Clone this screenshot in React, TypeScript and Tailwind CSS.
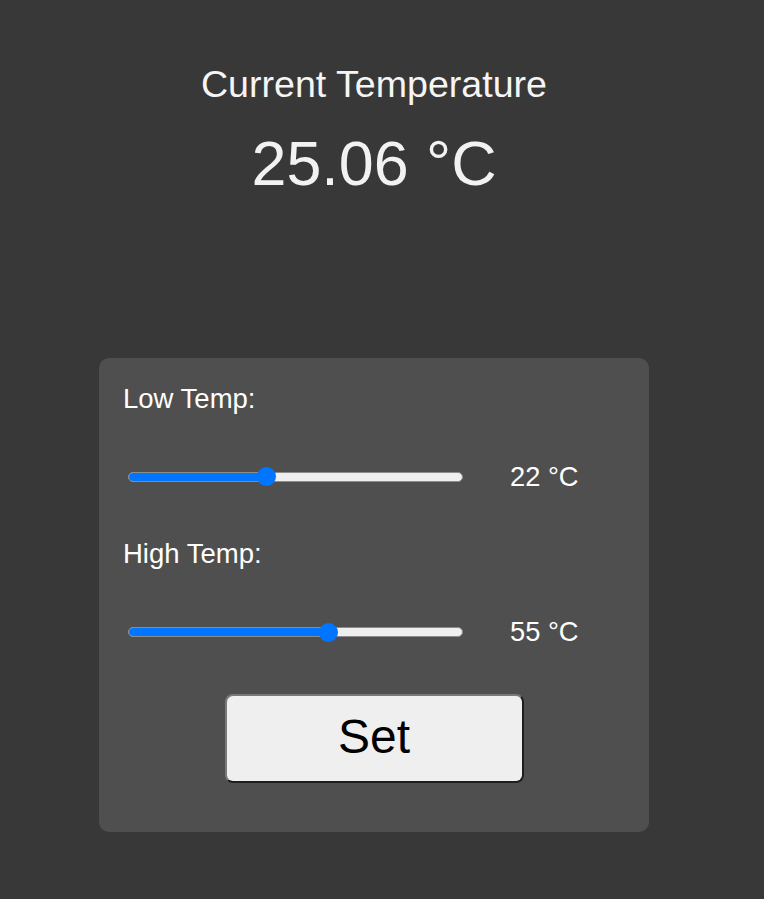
import React from "react";

const TRACK_W = 335;
const THUMB = 19;

function Slider({ frac }: { frac: number }) {
  const center = THUMB / 2 + frac * (TRACK_W - THUMB);
  return (
    <div className="relative h-[19px] w-[335px] shrink-0">
      <div className="absolute left-0 right-0 top-[4.5px] h-[10px] overflow-hidden rounded-full border border-[#8c8c8c] bg-[#efefef]">
        <div className="h-full bg-[#0075ff]" style={{ width: `${center}px` }} />
      </div>
      <div
        className="absolute top-0 h-[19px] w-[19px] rounded-full bg-[#0075ff]"
        style={{ left: `${center - THUMB / 2}px` }}
      />
    </div>
  );
}

function Row({ label, frac, value }: { label: string; frac: number; value: string }) {
  return (
    <div className="flex flex-col">
      <div className="h-[30px] text-[27.5px] leading-[30px]">{label}</div>
      <div className="mt-[47.7px] flex h-[30px] items-center">
        <div className="ml-[5px]">
          <Slider frac={frac} />
        </div>
        <div className="ml-[47px] text-[27.3px] leading-[30px]">{value}</div>
      </div>
    </div>
  );
}

export default function App() {
  return (
    <div
      className="min-h-screen w-full bg-[#383838] text-white"
      style={{ fontFamily: '"Liberation Sans", Arial, sans-serif' }}
    >
      <div className="flex w-[748px] flex-col items-center pt-[63px] pb-[67px]">
        <h2 className="text-[37.6px] font-normal leading-[42px] text-[#f5f5f5]">Current Temperature</h2>
        <div className="mt-[22.2px] text-[62.8px] leading-[72px] text-[#f2f2f2]">25.06 °C</div>

        <div className="mt-[159px] flex h-[474px] w-[550px] flex-col rounded-[10px] bg-[#4f4f4f] pl-[24px] pt-[26px]">
          <Row label="Low Temp:" frac={0.409} value="22 °C" />
          <div className="mt-[47.5px]">
            <Row label="High Temp:" frac={0.603} value="55 °C" />
          </div>
          <div className="mt-[47.3px] flex justify-center pr-[24px]">
            <button className="flex h-[89px] w-[299px] items-center justify-center rounded-[8px] border-2 border-t-[#7a7a7a] border-l-[#7a7a7a] border-r-[#1e1e1e] border-b-[#1e1e1e] bg-[#efefef] pb-[3px] text-[48px] leading-[48px] text-black">
              Set
            </button>
          </div>
        </div>
      </div>
    </div>
  );
}
